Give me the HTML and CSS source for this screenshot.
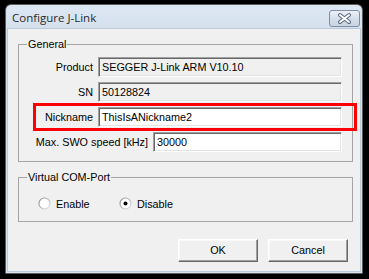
FILE: index.html
```html
<!DOCTYPE html>
<html>
<head>
<meta charset="utf-8">
<link rel="stylesheet" href="styles.css">
</head>
<body>
<div class="window">
  <div class="titlebar">
    <span class="title">Configure J-Link</span>
    <div class="close">
      <svg width="31" height="17" viewBox="0 0 31 17">
        <path d="M11 5 L20 12 M20 5 L11 12" stroke="#56667c" stroke-width="4" stroke-linecap="round"/>
        <path d="M11 5 L20 12 M20 5 L11 12" stroke="#ffffff" stroke-width="2" stroke-linecap="round"/>
      </svg>
    </div>
  </div>
  <div class="client">
    <fieldset class="group general">
      <legend>General</legend>
      <div class="row"><span class="label">Product</span><div class="field ro">SEGGER J-Link ARM V10.10</div></div>
      <div class="row"><span class="label">SN</span><div class="field ro">50128824</div></div>
      <div class="row"><span class="label">Nickname</span><div class="field">ThisIsANickname2</div><div class="highlight"></div></div>
      <div class="row"><span class="label">Max. SWO speed [kHz]</span><div class="field short">30000</div></div>
    </fieldset>
    <fieldset class="group vcom">
      <legend>Virtual COM-Port</legend>
      <div class="radios">
        <div class="radio first">
          <svg width="13" height="13" viewBox="0 0 13 13">
            <defs><linearGradient id="rg1" x1="0" y1="0" x2="1" y2="1"><stop offset="0" stop-color="#8a8a8a"/><stop offset="1" stop-color="#e6e6e6"/></linearGradient></defs>
            <circle cx="6.5" cy="6.5" r="5.5" fill="#ffffff" stroke="url(#rg1)" stroke-width="1.2"/>
          </svg>
          <span>Enable</span>
        </div>
        <div class="radio">
          <svg width="13" height="13" viewBox="0 0 13 13">
            <defs><linearGradient id="rg2" x1="0" y1="0" x2="1" y2="1"><stop offset="0" stop-color="#8a8a8a"/><stop offset="1" stop-color="#e6e6e6"/></linearGradient></defs>
            <circle cx="6.5" cy="6.5" r="5.5" fill="#ffffff" stroke="url(#rg2)" stroke-width="1.2"/>
            <circle cx="6.5" cy="6.5" r="2" fill="#000000"/>
          </svg>
          <span>Disable</span>
        </div>
      </div>
    </fieldset>
    <div class="buttons">
      <div class="btn">OK</div>
      <div class="btn">Cancel</div>
    </div>
  </div>
</div>
</body>
</html>
```
FILE: styles.css
```css
html, body {
  margin: 0;
  padding: 0;
  background: #000;
}
body {
  width: 369px;
  height: 279px;
  overflow: hidden;
  font-family: "Liberation Sans", Arial, sans-serif;
  font-size: 10.8px;
  color: #000;
}
.window {
  box-sizing: border-box;
  margin: 4px 0 0 5px;
  width: 358px;
  height: 270px;
  border: 1px solid #5c5c5c;
  border-radius: 6px 6px 0 0;
  padding: 0 2px 2px 2px;
  background: linear-gradient(#dde8f4, #d2deeb 30px, #d8e3ee);
  display: flex;
  flex-direction: column;
}
.titlebar {
  height: 24px;
  display: flex;
  justify-content: space-between;
  align-items: flex-start;
  flex: none;
}
.title {
  font-family: "Open Sans", "Noto Sans", sans-serif;
  font-size: 11.5px;
  line-height: 16px;
  margin: 5px 0 0 4px;
  color: #2a2a2a;
}
.close {
  width: 31px;
  height: 17px;
  box-sizing: border-box;
  margin-top: 5px;
  border: 1px solid #7e8ea4;
  border-radius: 3px;
  background: linear-gradient(#eef2f8, #d5deea 50%, #c8d4e3);
  display: flex;
  align-items: center;
  justify-content: center;
}
.close svg {
  display: block;
  margin: -1px;
}
.client {
  flex: 1;
  background: #f0f0f0;
  box-shadow: 0 0 0 1px #bccbdc;
  display: flex;
  flex-direction: column;
}
.group {
  box-sizing: border-box;
  margin: 8px 0 0 10px;
  width: 335px;
  border: 1px solid #a5a5a5;
  padding: 0 10px;
  min-inline-size: 0;
}
.group legend {
  line-height: 14px;
  padding: 0 1px;
  margin-left: -2px;
}
.general {
  padding-top: 6px;
  padding-bottom: 9px;
  display: flex;
  flex-direction: column;
  gap: 5px;
}
.row {
  position: relative;
  display: flex;
  align-items: center;
  height: 20px;
}
.label {
  flex: 1;
  text-align: right;
  margin-right: 5px;
  white-space: nowrap;
}
.field {
  box-sizing: border-box;
  width: 244px;
  height: 20px;
  border: 1px solid;
  border-color: #a0a0a0 #ffffff #ffffff #a0a0a0;
  box-shadow: inset 1px 1px 0 #696969, inset -1px -1px 0 #e3e3e3;
  background: #fff;
  padding-left: 3px;
  line-height: 18px;
  white-space: nowrap;
}
.field.ro {
  background: #f0f0f0;
}
.field.short {
  width: 189px;
}
.highlight {
  position: absolute;
  top: -4px;
  left: 4px;
  right: -15px;
  bottom: -4px;
  border: 3px solid #f00;
}
.vcom {
  padding-top: 13px;
  padding-bottom: 11px;
}
.radios {
  display: flex;
  align-items: center;
  height: 13px;
  margin-left: 9px;
}
.radio {
  display: flex;
  align-items: center;
  gap: 5px;
}
.radio svg {
  display: block;
}
.radio.first {
  width: 81px;
}
.buttons {
  display: flex;
  justify-content: flex-end;
  gap: 10px;
  margin-top: 17px;
  padding-right: 12px;
}
.btn {
  box-sizing: border-box;
  width: 80px;
  height: 23px;
  border: 1px solid;
  border-color: #ffffff #696969 #696969 #ffffff;
  box-shadow: inset -1px -1px 0 #a0a0a0, inset 1px 1px 0 #f8f8f8;
  background: #f0f0f0;
  text-align: center;
  line-height: 21px;
}
```
